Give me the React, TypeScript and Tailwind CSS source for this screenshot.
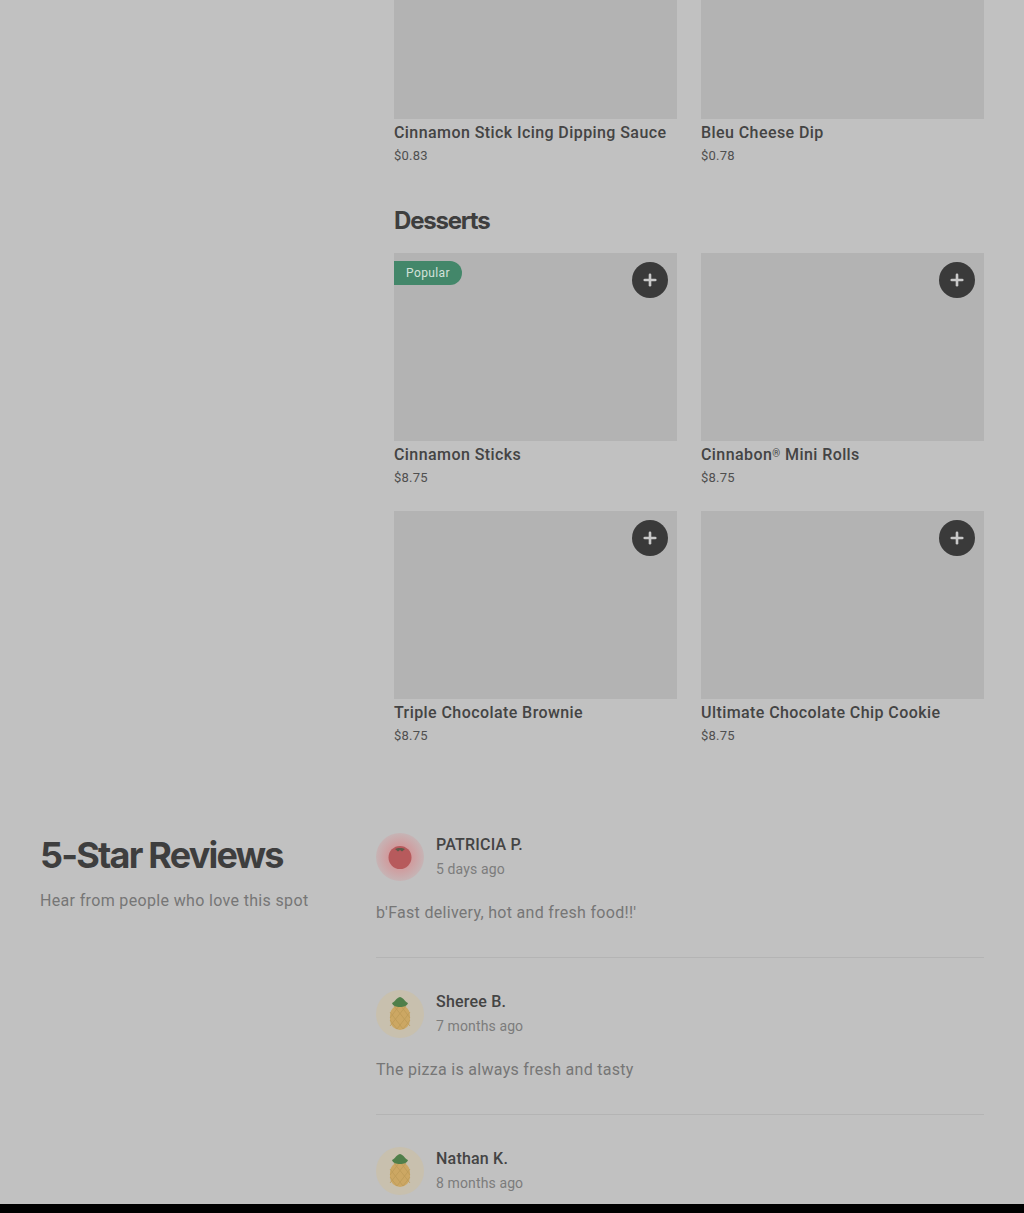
import { Plus } from 'lucide-react';

const desserts = [
  { name: 'Cinnamon Sticks', price: '$8.75', popular: true },
  { name: 'Cinnabon', mark: true, rest: ' Mini Rolls', price: '$8.75' },
  { name: 'Triple Chocolate Brownie', price: '$8.75' },
  { name: 'Ultimate Chocolate Chip Cookie', price: '$8.75' },
];

const dips = [
  { name: 'Cinnamon Stick Icing Dipping Sauce', price: '$0.83' },
  { name: 'Bleu Cheese Dip', price: '$0.78' },
];

const reviews = [
  { name: 'PATRICIA P.', when: '5 days ago', text: "b'Fast delivery, hot and fresh food!!'", avatar: 'tomato' },
  { name: 'Sheree B.', when: '7 months ago', text: 'The pizza is always fresh and tasty', avatar: 'pineapple' },
  { name: 'Nathan K.', when: '8 months ago', text: '', avatar: 'pineapple' },
];

const Tomato = () => (
  <svg viewBox="0 0 48 48" className="w-12 h-12 shrink-0">
    <defs>
      <radialGradient id="tomatoBg">
        <stop offset="0.5" stopColor="#d09c9e" />
        <stop offset="1" stopColor="#c6b4b5" />
      </radialGradient>
    </defs>
    <circle cx="24" cy="24" r="24" fill="url(#tomatoBg)" />
    <circle cx="24" cy="24.500" r="11.500" fill="#b75a5c" />
    <path d="M19 16c2-1.500 8-1.500 10 0l-3 2.500-2-1.500-2 1.500z" fill="#5e5a4a" />
  </svg>
);

const Pineapple = () => (
  <svg viewBox="0 0 48 48" className="w-12 h-12 shrink-0">
    <circle cx="24" cy="24" r="24" fill="#c8c0ae" />
    <rect x="14" y="15" width="20" height="25" rx="10" fill="#cca763" />
    <path d="M14 22l13 17M14 30l7 9M18 16l16 20M25 16l9 12M34 22L21 39M34 30l-7 9M30 16L14 36M23 16l-9 12" stroke="#bd9a58" strokeWidth="0.8" />
    <path d="M16 13c3-1 4-5 8-6 4 1 5 5 8 6-1 3-4 4-8 4s-7-1-8-4z" fill="#4f7f4a" />
  </svg>
);

type ItemProps = { name: string; price: string; popular?: boolean; mark?: boolean; rest?: string; h?: string };

const Item = ({ name, price, popular, mark, rest, h = 'h-[188px]' }: ItemProps) => (
  <div>
    <div className={`relative bg-[#b3b3b3] ${h}`}>
      {popular && (
        <span className="absolute left-0 top-2 h-6 pl-3 pr-3 flex items-center rounded-r-xl bg-[#43876a] text-[#d3e2da] text-xs tracking-[0.4px]">
          Popular
        </span>
      )}
      {h === 'h-[188px]' && (
        <button className="absolute right-[9px] top-[9px] w-9 h-9 rounded-full bg-[#3a3a3a] flex items-center justify-center text-[#c9c9c9]">
          <Plus size={18} strokeWidth={3.5} />
        </button>
      )}
    </div>
    <h3 className="mt-[2px] text-base leading-6 font-medium tracking-[0.42px] text-[#444444] whitespace-nowrap">
      {name}
      {mark && <span className="text-[10px] leading-none align-[3px]">®</span>}
      {rest}
    </h3>
    <p className="mt-[1px] text-[13px] leading-[20px] tracking-[0.2px] text-[#4f4f4f]">{price}</p>
  </div>
);

export default function App() {
  return (
    <div className="h-[1213px] overflow-hidden flex flex-col bg-black font-['Roboto',sans-serif]">
      <div className="h-[1204px] bg-[#c1c1c1] overflow-hidden">
        {/* Menu */}
        <div className="pl-[394px] pr-10">
          <div className="grid grid-cols-2 gap-x-6">
            {dips.map((d) => (
              <Item key={d.name} {...d} h="h-[119px]" />
            ))}
          </div>
          <h2 className="mt-[39px] text-2xl leading-8 font-bold tracking-[-1.2px] font-['Inter',sans-serif] text-[#3e3e3e]">Desserts</h2>
          <div className="mt-4 grid grid-cols-2 gap-x-6 gap-y-[23px]">
            {desserts.map((d) => (
              <Item key={d.name} {...d} />
            ))}
          </div>
        </div>

        {/* Reviews */}
        <div className="mt-[87px] pl-10 pr-10 flex">
          <div className="w-[336px] shrink-0">
            <h2 className="text-4xl leading-11 font-bold tracking-[-1.8px] font-['Inter',sans-serif] text-[#3e3e3e]">5-Star Reviews</h2>
            <p className="mt-3 text-base leading-6 tracking-[0.34px] text-[#767676]">Hear from people who love this spot</p>
          </div>
          <div className="flex-1">
            {reviews.map((r) => (
              <div key={r.name} className="pb-8 mb-8 border-b border-[#b4b4b4]">
                <div className="flex items-start gap-3">
                  {r.avatar === 'tomato' ? <Tomato /> : <Pineapple />}
                  <div>
                    <p className="text-base leading-6 font-medium tracking-[0.2px] text-[#444444]">{r.name}</p>
                    <p className="mt-[2px] text-sm leading-5 tracking-[0.12px] text-[#7c7c7c]">{r.when}</p>
                  </div>
                </div>
                <p className="mt-5 text-base leading-6 tracking-[0.3px] text-[#767676]">{r.text}</p>
              </div>
            ))}
          </div>
        </div>
      </div>
    </div>
  );
}
